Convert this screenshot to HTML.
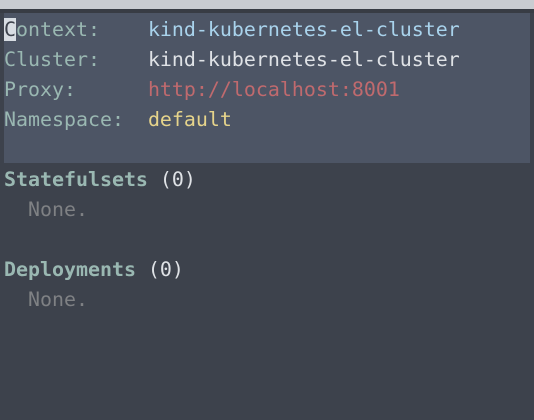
<!DOCTYPE html>
<html><head><meta charset="utf-8"><style>
html,body{margin:0;padding:0;}
body{width:534px;height:420px;background:#3d424c;overflow:hidden;position:relative;font-family:"DejaVu Sans Mono","Liberation Mono",monospace;font-size:19.93px;}
.top{position:absolute;left:0;top:0;width:534px;height:9px;background:#c9ccd1;}
.dk{position:absolute;left:0;top:9px;width:534px;height:4px;background:#383c44;}
.panel{position:absolute;left:4px;top:13px;width:526px;height:150px;background:#4d5565;}
.l{position:absolute;left:4px;height:30px;line-height:30px;white-space:pre;letter-spacing:0;}
.k{color:#9ab8b2;}
.b{font-weight:bold;color:#9ab8b2;}
.blue{color:#a9d3ec;}
.w{color:#dfe2e6;}
.r{color:#c06a6e;}
.y{color:#e6d48b;}
.g{color:#7f8184;}
.cur{background:#d8dde3;color:#3d424c;}
</style></head><body>
<div class="top"></div><div class="dk"></div><div class="panel"></div>
<div class="l" style="top:15px"><span class="k"><span class="cur">C</span>ontext:    </span><span class="blue">kind-kubernetes-el-cluster</span></div>
<div class="l" style="top:45px"><span class="k">Cluster:    </span><span class="w">kind-kubernetes-el-cluster</span></div>
<div class="l" style="top:75px"><span class="k">Proxy:      </span><span class="r">http://localhost:8001</span></div>
<div class="l" style="top:105px"><span class="k">Namespace:  </span><span class="y">default</span></div>
<div class="l" style="top:165px"><span class="b">Statefulsets</span><span class="w"> (0)</span></div>
<div class="l" style="top:195px"><span class="g">  None.</span></div>
<div class="l" style="top:255px"><span class="b">Deployments</span><span class="w"> (0)</span></div>
<div class="l" style="top:285px"><span class="g">  None.</span></div>
</body></html>
